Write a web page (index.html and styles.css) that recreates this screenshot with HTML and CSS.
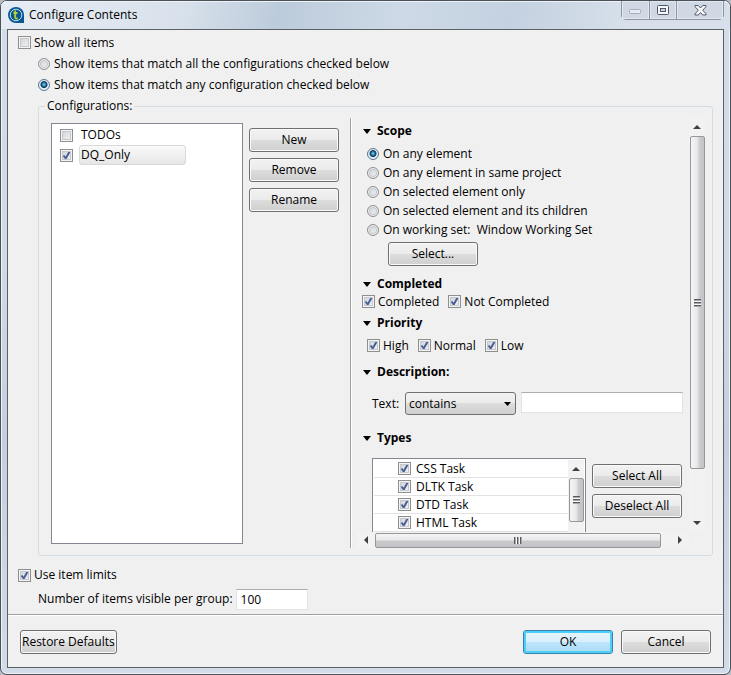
FILE: index.html
```html
<!DOCTYPE html>
<html lang="en">
<head>
    <meta charset="UTF-8">
    <meta name="viewport" content="width=device-width, initial-scale=1.0">
    <title>Configure Contents</title>
    <link rel="stylesheet" href="styles.css">
</head>
<body>
    <div class="window">
        <header class="titlebar">
            <svg class="logo" viewBox="0 0 16 16" width="16" height="16">
                <path d="M8 0a8 8 0 1 0 0 16h8V8A8 8 0 0 0 8 0z" fill="#0b5794"/>
                <circle cx="8" cy="8" r="5.8" fill="none" stroke="#b9d8ea" stroke-width="1"/>
                <path d="M7.2 3.6v6.6q0 1.8 2.6 1.2M5.4 6h4" fill="none" stroke="#b5d334" stroke-width="1.8"/>
            </svg>
            <h1>Configure Contents</h1>
            <div class="caption-buttons">
                <button type="button" class="minimize" aria-label="Minimize" disabled>
                    <svg viewBox="0 0 13 6" width="13" height="6"><rect x=".5" y=".5" width="11" height="4" rx="1" fill="#e8ebf2" stroke="#a9afbb"/></svg>
                </button>
                <button type="button" class="maximize" aria-label="Maximize">
                    <svg viewBox="0 0 13 11" width="13" height="11"><rect x=".5" y=".5" width="11" height="9" rx="1" fill="#f6f7fa" stroke="#50566a"/><rect x="3.5" y="3.5" width="5" height="3" fill="#cbd3e2" stroke="#50566a"/></svg>
                </button>
                <button type="button" class="close" aria-label="Close">
                    <svg viewBox="0 0 13 11" width="13" height="11"><path d="M1 .5h3.3L6.5 3 8.700 .5H12v1.200L8.700 5.200 12 8.800V10H8.700L6.500 7.500 4.300 10H1V8.800l3.300-3.600L1 1.700z" fill="#f8f8fb" stroke="#50566a"/></svg>
                </button>
            </div>
        </header>

        <form class="dialog">
            <div class="main">
                <label class="row"><input type="checkbox">Show all items</label>
                <label class="row indent"><input type="radio" name="match">Show items that match all the configurations checked below</label>
                <label class="row indent"><input type="radio" name="match" checked>Show items that match any configuration checked below</label>

                <fieldset class="configurations">
                    <legend>Configurations:</legend>
                    <ul class="config-list">
                        <li><label><input type="checkbox"><span>TODOs</span></label></li>
                        <li><label><input type="checkbox" checked><span class="selected">DQ_Only</span></label></li>
                    </ul>
                    <div class="config-buttons">
                        <button type="button" class="btn">New</button>
                        <button type="button" class="btn">Remove</button>
                        <button type="button" class="btn">Rename</button>
                    </div>
                    <div class="filters">
                        <div class="viewport">
                            <section class="scope">
                                <h2>Scope</h2>
                                <label><input type="radio" name="scope" checked>On any element</label>
                                <label><input type="radio" name="scope">On any element in same project</label>
                                <label><input type="radio" name="scope">On selected element only</label>
                                <label><input type="radio" name="scope">On selected element and its children</label>
                                <label><input type="radio" name="scope">On working set:&nbsp; Window Working Set</label>
                                <button type="button" class="btn">Select...</button>
                            </section>
                            <section class="completed">
                                <h2>Completed</h2>
                                <div class="checks">
                                    <label><input type="checkbox" checked>Completed</label>
                                    <label><input type="checkbox" checked>Not Completed</label>
                                </div>
                            </section>
                            <section class="priority">
                                <h2>Priority</h2>
                                <div class="checks">
                                    <label><input type="checkbox" checked>High</label>
                                    <label><input type="checkbox" checked>Normal</label>
                                    <label><input type="checkbox" checked>Low</label>
                                </div>
                            </section>
                            <section class="description">
                                <h2>Description:</h2>
                                <div class="text-row">
                                    <label for="condition">Text:</label>
                                    <select id="condition">
                                        <option>contains</option>
                                        <option>doesn't contain</option>
                                    </select>
                                    <input type="text" aria-label="Description text">
                                </div>
                            </section>
                            <section class="types">
                                <h2>Types</h2>
                                <div class="types-row">
                                    <div class="type-list">
                                        <ul>
                                            <li><label><input type="checkbox" checked>CSS Task</label></li>
                                            <li><label><input type="checkbox" checked>DLTK Task</label></li>
                                            <li><label><input type="checkbox" checked>DTD Task</label></li>
                                            <li><label><input type="checkbox" checked>HTML Task</label></li>
                                        </ul>
                                        <div class="scrollbar vertical short">
                                            <i class="arrow up"></i>
                                            <div class="thumb"><i class="grip"></i></div>
                                        </div>
                                    </div>
                                    <div class="type-buttons">
                                        <button type="button" class="btn">Select All</button>
                                        <button type="button" class="btn">Deselect All</button>
                                    </div>
                                </div>
                            </section>
                        </div>
                        <div class="scrollbar vertical">
                            <i class="arrow up"></i>
                            <div class="thumb"><i class="grip"></i></div>
                            <i class="arrow down"></i>
                        </div>
                        <div class="scrollbar horizontal">
                            <i class="arrow left"></i>
                            <div class="thumb"><i class="grip"></i></div>
                            <i class="arrow right"></i>
                        </div>
                    </div>
                </fieldset>

                <label class="row limits"><input type="checkbox" checked>Use item limits</label>
                <div class="row limits indent">
                    <label for="limit">Number of items visible per group:</label>
                    <input type="text" id="limit" value="100">
                </div>
            </div>
            <footer class="footer">
                <button type="button" class="btn restore">Restore Defaults</button>
                <button type="submit" class="btn default">OK</button>
                <button type="button" class="btn">Cancel</button>
            </footer>
        </form>
    </div>
</body>
</html>
```

FILE: styles.css
```css
* {
    box-sizing: border-box;
}
body {
    margin: 0;
    background-color: #b8bcc2;
    color: #000;
    font: 12px/16px "Segoe UI", "Open Sans", "Noto Sans", sans-serif;
}
button, input, select {
    margin: 0;
    color: inherit;
    font: inherit;
}
h1, h2, ul {
    margin: 0;
    padding: 0;
    font: inherit;
    list-style: none;
}

/* window frame */
.window {
    display: flex;
    flex-direction: column;
    height: 100vh;
    min-height: 600px;
    padding: 0 6px 6px;
    border: 1px solid #4c5158;
    border-radius: 7px;
    background: linear-gradient(#d3dde8, #cfdae6 40%, #c3cfdf 65%, #d1dce8);
    box-shadow: inset 0 0 0 1px #eef3f8;
}
.titlebar {
    display: flex;
    align-items: center;
    flex: none;
    height: 28px;
    margin: 0 -6px;
    padding: 0 6px 0 7px;
    border-radius: 6px 6px 0 0;
    background: linear-gradient(100deg, #e6ecf3, #d8e1eb 25%, #bccbdb 38%, #cdd9e6 55%, #c4d1e0 70%, #d6dfea 85%);
    box-shadow: inset 0 1px #eef3f8;
}
.titlebar h1 {
    flex: 1;
    padding-left: 5px;
}
.caption-buttons {
    display: flex;
    align-self: flex-start;
    height: 19px;
    border: 1px solid #8d95a3;
    border-top: 0;
    border-radius: 0 0 5px 5px;
    background-color: #d0d8e4;
}
.caption-buttons button {
    display: flex;
    align-items: center;
    justify-content: center;
    width: 27px;
    padding: 0;
    border: 0;
    border-right: 1px solid #8d95a3;
    background: none;
    box-shadow: inset 0 0 0 1px #e2e8f0;
}
.caption-buttons .minimize {
    width: 28px;
    padding-top: 4px;
}
.caption-buttons .close {
    width: 46px;
    border: 0;
}

.dialog {
    display: flex;
    flex-direction: column;
    flex: 1;
    min-height: 0;
    border: 1px solid #5c6168;
    background-color: #f0f0f0;
}
.main {
    display: flex;
    flex-direction: column;
    flex: 1;
    min-height: 0;
    padding: 2px 10px 3px;
}
.row {
    display: flex;
    align-items: center;
    flex: none;
    height: 21px;
}
.row.limits {
    height: 24px;
}
.row.indent {
    padding-left: 20px;
}

/* check boxes and radios */
input[type="checkbox"], input[type="radio"] {
    appearance: none;
    flex: none;
    width: 13px;
    height: 13px;
    margin-right: 3px;
    border: 1px solid #8e8f8f;
    background: linear-gradient(135deg, #cbcfd5, #f6f6f6);
    box-shadow: inset 0 0 0 1px #f4f4f4, inset 0 0 0 2px #c4c8cd;
}
input[type="checkbox"]:checked {
    background: url('data:image/svg+xml,<svg xmlns="http://www.w3.org/2000/svg" viewBox="0 0 11 11"><path d="M2.500 5.500L4.700 8.500L8.500 1.800" fill="none" stroke="%234a5f97" stroke-width="2"/></svg>') center / 11px 11px, linear-gradient(135deg, #cbcfd5, #f6f6f6);
}
input[type="radio"] {
    width: 12px;
    height: 12px;
    margin-right: 4px;
    border-radius: 50%;
}
input[type="radio"]:checked {
    border-color: #56768f;
    background: radial-gradient(circle at 50% 45%, #7fd3f2 0, #1b6fa5 2px, #0c3150 3px, #dbe6ee 4px);
    box-shadow: inset 0 0 0 1px #e8f2f8;
}

input[type="text"] {
    height: 21px;
    padding: 0 4px;
    border: 1px solid #e2e3ea;
    border-top-color: #abadb3;
    background-color: #fff;
}
#limit {
    width: 72px;
    margin-left: 3px;
}

.btn {
    flex: none;
    width: 90px;
    height: 24px;
    padding: 0;
    border: 1px solid #707070;
    border-radius: 3px;
    background: linear-gradient(#f2f2f2, #ebebeb 50%, #dddddd 50%, #cfcfcf);
    box-shadow: inset 0 0 0 1px #fafafa;
}
.btn.default {
    border-color: #3c7fb1;
    background: linear-gradient(#e6f4fc, #d9effb 50%, #bee6fd 50%, #abdaf3);
    box-shadow: inset 0 0 0 2px #48d0f8;
}

/* configurations group */
.configurations {
    display: flex;
    flex: 1;
    min-width: 0;
    min-height: 0;
    margin: 3px 0 7px 20px;
    padding: 4px 7px 7px 12px;
    border: 1px solid #d3dde6;
    border-radius: 3px;
}
.configurations legend {
    margin-left: -6px;
    padding: 0 2px;
}
.config-list {
    flex: 0 1 192px;
    margin: 5px 6px 4px 0;
    padding: 1px 8px;
    border: 1px solid #828790;
    background-color: #fff;
}
.config-list label {
    display: flex;
    align-items: center;
    height: 20px;
}
.config-list span {
    padding: 1px;
    margin-left: 3px;
    border: 1px solid transparent;
}
.config-list .selected {
    width: 107px;
    border-color: #d9d9d9;
    border-radius: 3px;
    background: linear-gradient(#fafafa, #e6e6e6);
}
.config-buttons {
    display: flex;
    flex-direction: column;
    gap: 6px;
    padding: 10px 11px 0 0;
}

/* scrolled filter pane */
.filters {
    display: grid;
    grid-template-columns: minmax(0, 1fr) 16px;
    grid-template-rows: minmax(0, 1fr) 16px;
    flex: 1;
    min-width: 0;
    padding-left: 6px;
    border-left: 1px solid #a0a0a0;
    box-shadow: inset 1px 0 #fff;
}
.viewport {
    overflow: hidden;
    padding: 5px 6px 0 5px;
}
.viewport h2 {
    display: flex;
    align-items: center;
    height: 16px;
    font-weight: bold;
}
.viewport h2::before {
    content: "";
    margin: 0 6px 0 1px;
    border: 4px solid transparent;
    border-top: 5px solid #000;
    border-bottom: 0;
}
.viewport label {
    display: flex;
    align-items: center;
    height: 19px;
    white-space: nowrap;
}
.scope label {
    padding-left: 5px;
}
.scope h2 {
    margin-bottom: 5px;
}
.scope .btn {
    margin: 3px 0 0 26px;
}
.completed {
    margin-top: 10px;
}
.priority {
    margin-top: 4px;
}
.checks {
    display: flex;
    gap: 9px;
}
.priority .checks {
    margin-top: 5px;
    padding-left: 5px;
}
.description {
    margin-top: 9px;
}
.text-row {
    display: flex;
    gap: 5px;
    margin-top: 12px;
    padding-left: 10px;
}
.text-row label {
    width: 28px;
    height: 23px;
}
.text-row select {
    appearance: none;
    width: 111px;
    height: 23px;
    padding: 0 3px;
    border: 1px solid #707070;
    border-radius: 3px;
    background: url('data:image/svg+xml,<svg xmlns="http://www.w3.org/2000/svg" viewBox="0 0 7 4"><path d="M0 0H7L3.500 4z"/></svg>') right 4px center / 7px 4px no-repeat, linear-gradient(#f2f2f2, #ebebeb 50%, #dddddd 50%, #cfcfcf);
}
.text-row input {
    flex: 1;
    min-width: 0;
}
.types {
    margin-top: 15px;
}
.types-row {
    display: flex;
    gap: 6px;
    margin-top: 12px;
    padding: 0 1px 0 10px;
}
.type-list {
    display: flex;
    flex: 1;
    height: 90px;
    padding: 1px;
    border: 1px solid #828790;
    background-color: #fff;
}
.type-list ul {
    flex: 1;
}
.type-list li {
    height: 18px;
    padding-left: 24px;
    border-bottom: 1px solid #e3e3e3;
}
.type-list label {
    height: 17px;
}
.type-list input {
    margin-right: 5px;
}
.type-buttons {
    display: flex;
    flex-direction: column;
    gap: 6px;
    padding-top: 6px;
}

/* scroll bars */
.scrollbar {
    display: flex;
    align-items: center;
    background-color: #f2f2f2;
}
.scrollbar.vertical {
    flex-direction: column;
    width: 16px;
}
.thumb {
    display: flex;
    align-items: center;
    justify-content: center;
    border: 1px solid #979797;
    border-radius: 2px;
}
.vertical .thumb {
    width: 15px;
    flex: 1;
    background: linear-gradient(90deg, #f5f5f5, #e9e9eb 45%, #c9c9cc 70%, #c4c4c8);
}
.horizontal .thumb {
    height: 15px;
    flex: 1;
    background: linear-gradient(#f5f5f5, #e9e9eb 45%, #c9c9cc 55%, #c4c4c8);
}
.vertical .arrow.down {
    margin-top: 45px;
}
.horizontal .arrow.right {
    margin-left: 10px;
}
.vertical.short .thumb {
    flex: none;
    height: 44px;
}
.grip {
    width: 7px;
    height: 8px;
    background: repeating-linear-gradient(#5a5a5e 0 1px, #a8a8ac 1px 2px, #f8f8f8 2px 3px);
}
.horizontal .grip {
    width: 8px;
    height: 7px;
    background: repeating-linear-gradient(90deg, #5a5a5e 0 1px, #a8a8ac 1px 2px, #f8f8f8 2px 3px);
}
.arrow {
    display: flex;
    align-items: center;
    justify-content: center;
    flex: none;
    width: 16px;
    height: 18px;
}
.arrow::before {
    content: "";
    border: 4px solid transparent;
}
.arrow.up::before {
    border-top: 0;
    border-bottom-color: #404040;
}
.arrow.down::before {
    border-bottom: 0;
    border-top-color: #404040;
}
.horizontal .arrow {
    width: 18px;
    height: 16px;
}
.arrow.left::before {
    border-left: 0;
    border-right-color: #404040;
}
.arrow.right::before {
    border-right: 0;
    border-left-color: #404040;
}

/* dialog buttons */
.footer {
    display: flex;
    gap: 8px;
    flex: none;
    padding: 15px 12px 13px;
    border-top: 1px solid #a0a0a0;
    box-shadow: inset 0 1px #fff;
}
.footer .restore {
    width: auto;
    margin-right: auto;
    padding: 0 1px;
}
```
